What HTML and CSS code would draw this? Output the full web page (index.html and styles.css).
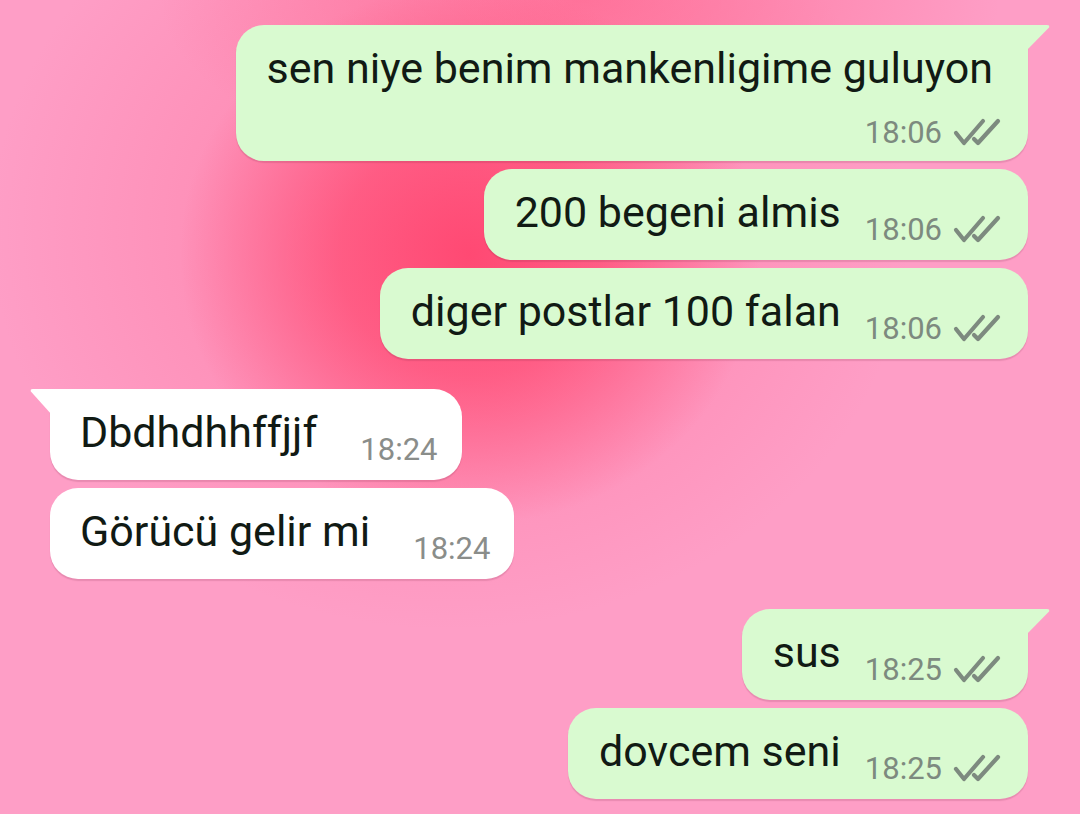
FILE: index.html
```html
<!DOCTYPE html>
<html lang="tr">
<head>
<meta charset="utf-8">
<title>Chat</title>
<link rel="stylesheet" href="styles.css">
</head>
<body>
<main class="chat">
  <div class="bubble out tail block">
    <div class="text">sen niye benim mankenligime guluyon</div>
    <div class="meta"><span class="time">18:06</span><svg class="ticks" viewBox="0 0 48 28"><path d="M3 15 L11 25 L30 3"/><path d="M21 21 L25 25 L45 3"/></svg></div>
  </div>
  <div class="bubble out">
    <div class="text">200 begeni almis</div>
    <div class="meta"><span class="time">18:06</span><svg class="ticks" viewBox="0 0 48 28"><path d="M3 15 L11 25 L30 3"/><path d="M21 21 L25 25 L45 3"/></svg></div>
  </div>
  <div class="bubble out">
    <div class="text">diger postlar 100 falan</div>
    <div class="meta"><span class="time">18:06</span><svg class="ticks" viewBox="0 0 48 28"><path d="M3 15 L11 25 L30 3"/><path d="M21 21 L25 25 L45 3"/></svg></div>
  </div>

  <div class="bubble in tail group">
    <div class="text">Dbdhdhhffjjf</div>
    <div class="meta"><span class="time">18:24</span></div>
  </div>
  <div class="bubble in">
    <div class="text">Görücü gelir mi</div>
    <div class="meta"><span class="time">18:24</span></div>
  </div>

  <div class="bubble out tail group">
    <div class="text">sus</div>
    <div class="meta"><span class="time">18:25</span><svg class="ticks" viewBox="0 0 48 28"><path d="M3 15 L11 25 L30 3"/><path d="M21 21 L25 25 L45 3"/></svg></div>
  </div>
  <div class="bubble out">
    <div class="text">dovcem seni</div>
    <div class="meta"><span class="time">18:25</span><svg class="ticks" viewBox="0 0 48 28"><path d="M3 15 L11 25 L30 3"/><path d="M21 21 L25 25 L45 3"/></svg></div>
  </div>
</main>
</body>
</html>
```

FILE: styles.css
```css
html, body {
  margin: 0;
  padding: 0;
}
body {
  width: 1080px;
  height: 814px;
  overflow: hidden;
  font-family: Roboto, "Noto Sans", Arial, sans-serif;
  background-color: #fe9ec6;
  background-image:
    radial-gradient(ellipse 290px 270px at 470px 255px, rgba(255,70,112,0.95) 0%, rgba(255,78,118,0.75) 45%, rgba(255,150,190,0) 100%),
    radial-gradient(ellipse 420px 180px at 580px 0px, rgba(255,100,140,0.7) 0%, rgba(255,150,190,0) 100%),
    radial-gradient(ellipse 460px 400px at 450px 230px, rgba(255,105,148,0.6) 0%, rgba(255,120,160,0.35) 55%, rgba(255,150,190,0) 100%);
}
.chat {
  display: flex;
  flex-direction: column;
  padding: 25px 52px 0 50px;
  gap: 8px;
}
.bubble {
  position: relative;
  display: flex;
  align-items: flex-end;
  border-radius: 28px;
  box-shadow: 0 2px 1px rgba(120, 40, 70, 0.16);
  color: #111a14;
}
.bubble.out {
  align-self: flex-end;
  background: #d9fad0;
  padding: 17px 27px 12px 31px;
}
.bubble.in {
  align-self: flex-start;
  background: #ffffff;
  padding: 17px 24px 12px 30px;
}
.bubble.group {
  margin-top: 22px;
}
.bubble.tail.out {
  border-top-right-radius: 0;
}
.bubble.tail.in {
  border-top-left-radius: 0;
}
.bubble.tail.out::after {
  content: "";
  position: absolute;
  top: 0;
  right: -22px;
  width: 24px;
  height: 26px;
  background: #d9fad0;
  clip-path: polygon(0 0, 88% 0, 96% 2%, 97% 9%, 0 100%);
}
.bubble.tail.in::after {
  content: "";
  position: absolute;
  top: 0;
  left: -20px;
  width: 22px;
  height: 26px;
  background: #ffffff;
  clip-path: polygon(100% 0, 12% 0, 4% 2%, 3% 9%, 100% 100%);
}
.text {
  font-size: 43px;
  line-height: 52px;
  padding-bottom: 10px;
  white-space: nowrap;
}
.meta {
  display: flex;
  align-items: center;
  margin-left: 24px;
  height: 36px;
}
.in .meta {
  margin-left: 43px;
}
.time {
  font-size: 31px;
  color: #8a8d8a;
  line-height: 36px;
}
.out .time {
  color: #7d8a7f;
}
.ticks {
  width: 48px;
  height: 28px;
  margin-left: 11px;
  margin-top: -2px;
  fill: none;
  stroke: #7d8a7f;
  stroke-width: 4.2;
  stroke-linecap: round;
  stroke-linejoin: round;
}
.bubble.block {
  flex-direction: column;
  align-items: stretch;
  padding: 17px 27px 10px 31px;
}
.bubble.block .text {
  padding-bottom: 21px;
  padding-right: 8px;
}
.bubble.block .meta {
  align-self: flex-end;
  margin-left: 0;
}
```
